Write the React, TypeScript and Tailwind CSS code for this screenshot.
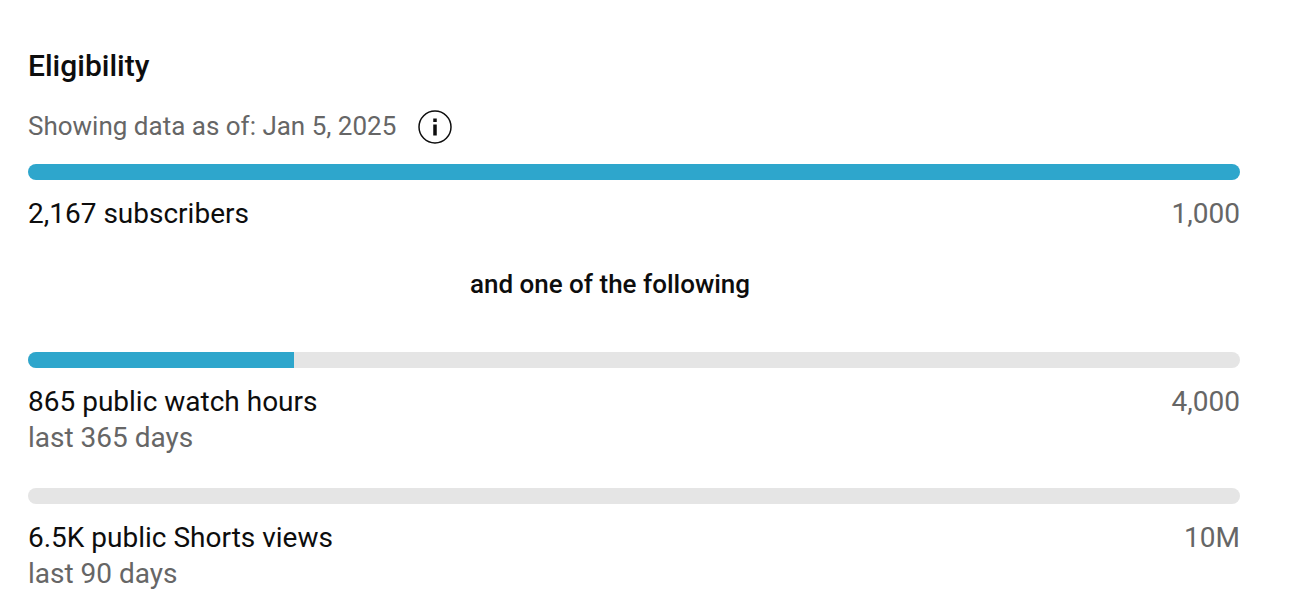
function Bar({ pct }: { pct: string }) {
   return (
      <div className="h-4 w-full overflow-hidden rounded-[8px] bg-[#e5e5e5]">
         <div className={`h-full bg-[#2ea6cc] ${pct}`} />
      </div>
   );
}

function Stat({ label, sub, target }: { label: string; sub?: string; target: string }) {
   return (
      <div className="mt-[16px] flex justify-between text-[28px] leading-[36px]">
         <div>
            <div className="text-[#0d0d0d]">{label}</div>
            {sub && <div className="text-[#666666]">{sub}</div>}
         </div>
         <div className="text-[#666666]">{target}</div>
      </div>
   );
}

function InfoIcon() {
   return (
      <svg viewBox="0 0 36 36" className="ml-[21px] h-[36px] w-[36px]" fill="none">
         <circle cx="18" cy="18" r="16" stroke="#0d0d0d" strokeWidth="1.5" />
         <rect x="16.25" y="9.5" width="3.5" height="3.5" fill="#0d0d0d" />
         <rect x="16.25" y="15.5" width="3.5" height="11" fill="#0d0d0d" />
      </svg>
   );
}

export default function App() {
   return (
      <main className="h-[610px] w-[1306px] overflow-hidden bg-white pl-[28px] pr-[66px] pt-[48px] font-['Roboto',sans-serif] text-[#0d0d0d]">
         <h1 className="text-[30px] font-medium leading-[36px]">Eligibility</h1>
         <div className="mt-[25px] flex h-[36px] items-center text-[26px] text-[#666666]">
            <span className="mb-[2px]">Showing data as of: Jan 5, 2025</span>
            <InfoIcon />
         </div>
         <div className="mt-[19px]">
            <Bar pct="w-full" />
         </div>
         <Stat label="2,167 subscribers" target="1,000" />
         <div className="mr-[48px] mt-[34px] text-center text-[26px] font-medium leading-[36px]">and one of the following</div>
         <div className="mt-[50px]">
            <Bar pct="w-[21.98%]" />
         </div>
         <Stat label="865 public watch hours" sub="last 365 days" target="4,000" />
         <div className="mt-[32px]">
            <Bar pct="w-0" />
         </div>
         <Stat label="6.5K public Shorts views" sub="last 90 days" target="10M" />
      </main>
   );
}
